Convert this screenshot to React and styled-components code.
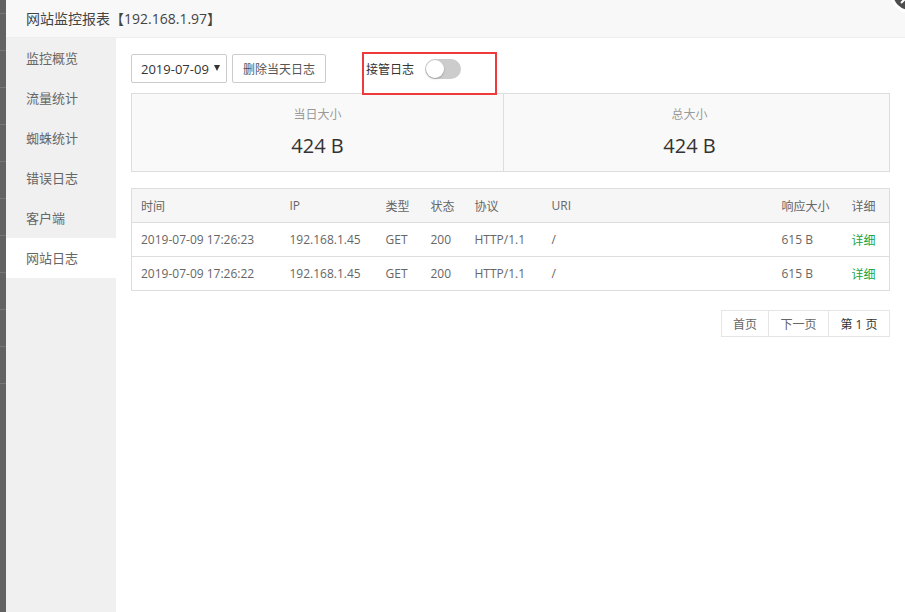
import React from "react";
import styled, { createGlobalStyle } from "styled-components";

const GlobalStyle = createGlobalStyle`
    html, body {
        margin: 0;
        padding: 0;
        width: 905px;
        height: 612px;
        overflow: hidden;
        font-family: "Open Sans", "Noto Sans CJK SC", sans-serif;
    }
    * { box-sizing: border-box; }
`;

const menu = ["监控概览", "流量统计", "蜘蛛统计", "错误日志", "客户端", "网站日志"];

const logs = [
    { time: "2019-07-09 17:26:23", ip: "192.168.1.45", method: "GET", status: "200", proto: "HTTP/1.1", uri: "/", size: "615 B" },
    { time: "2019-07-09 17:26:22", ip: "192.168.1.45", method: "GET", status: "200", proto: "HTTP/1.1", uri: "/", size: "615 B" },
];

export default function App() {
    return (
        <>
            <GlobalStyle />
            <Page>
                <BackStrip>
                    {Array.from({ length: 11 }).map((_, i) => <StripLine key={i} />)}
                </BackStrip>
                <Modal>
                    <CloseBtn>
                        <svg width="12" height="12" viewBox="0 0 12 12">
                            <path d="M2 10 L10 2" stroke="#fff" strokeWidth="2" />
                        </svg>
                    </CloseBtn>
                    <TitleBar>网站监控报表【192.168.1.97】</TitleBar>
                    <Body>
                        <Sidebar>
                            {menu.map((m, i) => (
                                <MenuItem key={m} $active={i === 5}>{m}</MenuItem>
                            ))}
                        </Sidebar>
                        <Content>
                            <Toolbar>
                                <Select>
                                    2019-07-09
                                    <Caret />
                                </Select>
                                <Button>删除当天日志</Button>
                                <SwitchLabel>接管日志</SwitchLabel>
                                <Switch><Knob /></Switch>
                                <Highlight />
                            </Toolbar>
                            <Stats>
                                <Stat>
                                    <StatLabel>当日大小</StatLabel>
                                    <StatValue>424 B</StatValue>
                                </Stat>
                                <Stat $padRight={14}>
                                    <StatLabel>总大小</StatLabel>
                                    <StatValue>424 B</StatValue>
                                </Stat>
                            </Stats>
                            <Table>
                                <colgroup>
                                    <col style={{ width: 149 }} />
                                    <col style={{ width: 96 }} />
                                    <col style={{ width: 45 }} />
                                    <col style={{ width: 44 }} />
                                    <col style={{ width: 77 }} />
                                    <col />
                                    <col style={{ width: 70 }} />
                                    <col style={{ width: 47 }} />
                                </colgroup>
                                <thead>
                                    <tr>
                                        <Th>时间</Th>
                                        <Th>IP</Th>
                                        <Th>类型</Th>
                                        <Th>状态</Th>
                                        <Th>协议</Th>
                                        <Th>URI</Th>
                                        <Th>响应大小</Th>
                                        <Th>详细</Th>
                                    </tr>
                                </thead>
                                <tbody>
                                    {logs.map((r) => (
                                        <tr key={r.time}>
                                            <Td>{r.time}</Td>
                                            <Td>{r.ip}</Td>
                                            <Td>{r.method}</Td>
                                            <Td>{r.status}</Td>
                                            <Td>{r.proto}</Td>
                                            <Td>{r.uri}</Td>
                                            <Td>{r.size}</Td>
                                            <Td><Link>详细</Link></Td>
                                        </tr>
                                    ))}
                                </tbody>
                            </Table>
                            <Pager>
                                <PageBtn $w={48}>首页</PageBtn>
                                <PageBtn $w={61}>下一页</PageBtn>
                                <PageBtn $w={62} $current>第 1 页</PageBtn>
                            </Pager>
                        </Content>
                    </Body>
                </Modal>
            </Page>
        </>
    );
}

const Page = styled.div`
    display: flex;
    width: 905px;
    height: 612px;
    overflow: hidden;
`;
const BackStrip = styled.div`
    width: 6px;
    background: #626262;
    display: flex;
    flex-direction: column;
    padding-top: 13px;
    gap: 36px;
`;
const StripLine = styled.div`
    height: 1px;
    background: #777;
`;
const Modal = styled.div`
    flex: 1;
    display: flex;
    flex-direction: column;
    background: #fff;
    position: relative;
`;
const CloseBtn = styled.div`
    position: absolute;
    top: -27px;
    right: -25px;
    width: 40px;
    height: 40px;
    border-radius: 50%;
    background: #4d4d4d;
    border: 3px solid #fff;
    display: flex;
    align-items: flex-end;
    justify-content: flex-start;
    padding: 0 0 5px 6px;
`;
const TitleBar = styled.div`
    height: 38px;
    line-height: 37px;
    background: #f8f8f8;
    border-bottom: 1px solid #eee;
    padding-left: 20px;
    font-size: 14px;
    color: #444;
`;
const Body = styled.div`
    flex: 1;
    display: flex;
`;
const Sidebar = styled.div`
    width: 110px;
    background: #f0f0f0;
    display: flex;
    flex-direction: column;
`;
const MenuItem = styled.div`
    height: 40px;
    line-height: 40px;
    padding-left: 20px;
    font-size: 13px;
    color: #666;
    background: ${(p) => (p.$active ? "#fff" : "transparent")};
`;
const Content = styled.div`
    flex: 1;
    padding: 16px 15px;
    display: flex;
    flex-direction: column;
`;
const Toolbar = styled.div`
    display: flex;
    align-items: center;
    height: 29px;
    position: relative;
`;
const Select = styled.div`
    height: 29px;
    width: 96px;
    border: 1px solid #ccc;
    border-radius: 2px;
    display: flex;
    align-items: center;
    padding-left: 9px;
    font-size: 13px;
    color: #333;
    gap: 5px;
`;
const Caret = styled.span`
    width: 0;
    height: 0;
    border-left: 3.5px solid transparent;
    border-right: 3.5px solid transparent;
    border-top: 6px solid #333;
    margin-top: -2px;
`;
const Button = styled.div`
    height: 29px;
    margin-left: 5px;
    padding: 0 10px;
    border: 1px solid #ccc;
    border-radius: 2px;
    display: flex;
    align-items: center;
    font-size: 12px;
    color: #555;
`;
const SwitchLabel = styled.span`
    margin-left: 40px;
    font-size: 12px;
    color: #333;
`;
const Switch = styled.div`
    margin-left: 11px;
    width: 36px;
    height: 20px;
    border-radius: 10px;
    background: #ccc;
    position: relative;
`;
const Knob = styled.div`
    position: absolute;
    left: 1px;
    top: 1px;
    width: 18px;
    height: 18px;
    border-radius: 50%;
    background: #fff;
    box-shadow: 0 1px 2px rgba(0, 0, 0, 0.25);
`;
const Highlight = styled.div`
    position: absolute;
    left: 231px;
    top: -2px;
    width: 135px;
    height: 43px;
    border: 2px solid #ee3a3a;
`;
const Stats = styled.div`
    margin-top: 10px;
    height: 79px;
    display: grid;
    grid-template-columns: 371px 1fr;
    border: 1px solid #ddd;
    background: #f9f9f9;
`;
const Stat = styled.div`
    display: flex;
    flex-direction: column;
    align-items: center;
    padding-top: 12px;
    padding-right: ${(p) => p.$padRight || 0}px;
    & + & { border-left: 1px solid #ddd; }
`;
const StatLabel = styled.div`
    font-size: 12px;
    color: #999;
    line-height: 18px;
`;
const StatValue = styled.div`
    margin-top: 8px;
    font-size: 20px;
    color: #333;
    line-height: 28px;
`;
const Table = styled.table`
    margin-top: 16px;
    width: 100%;
    border-collapse: collapse;
    table-layout: fixed;
    border: 1px solid #ddd;
    font-size: 12px;
    color: #666;
`;
const Th = styled.th`
    height: 34px;
    background: #f6f6f6;
    text-align: left;
    font-weight: normal;
    padding: 0 9px;
    border-bottom: 1px solid #ddd;
    white-space: nowrap;
`;
const Td = styled.td`
    height: 34px;
    padding: 0 9px;
    border-bottom: 1px solid #ddd;
    white-space: nowrap;
`;
const Link = styled.span`
    color: #20a53a;
`;
const Pager = styled.div`
    margin-top: 19px;
    display: flex;
    justify-content: flex-end;
`;
const PageBtn = styled.div`
    width: ${(p) => p.$w}px;
    height: 27px;
    border: 1px solid #e5e5e5;
    margin-left: -1px;
    display: flex;
    align-items: center;
    justify-content: center;
    font-size: 12px;
    color: ${(p) => (p.$current ? "#333" : "#666")};
`;
